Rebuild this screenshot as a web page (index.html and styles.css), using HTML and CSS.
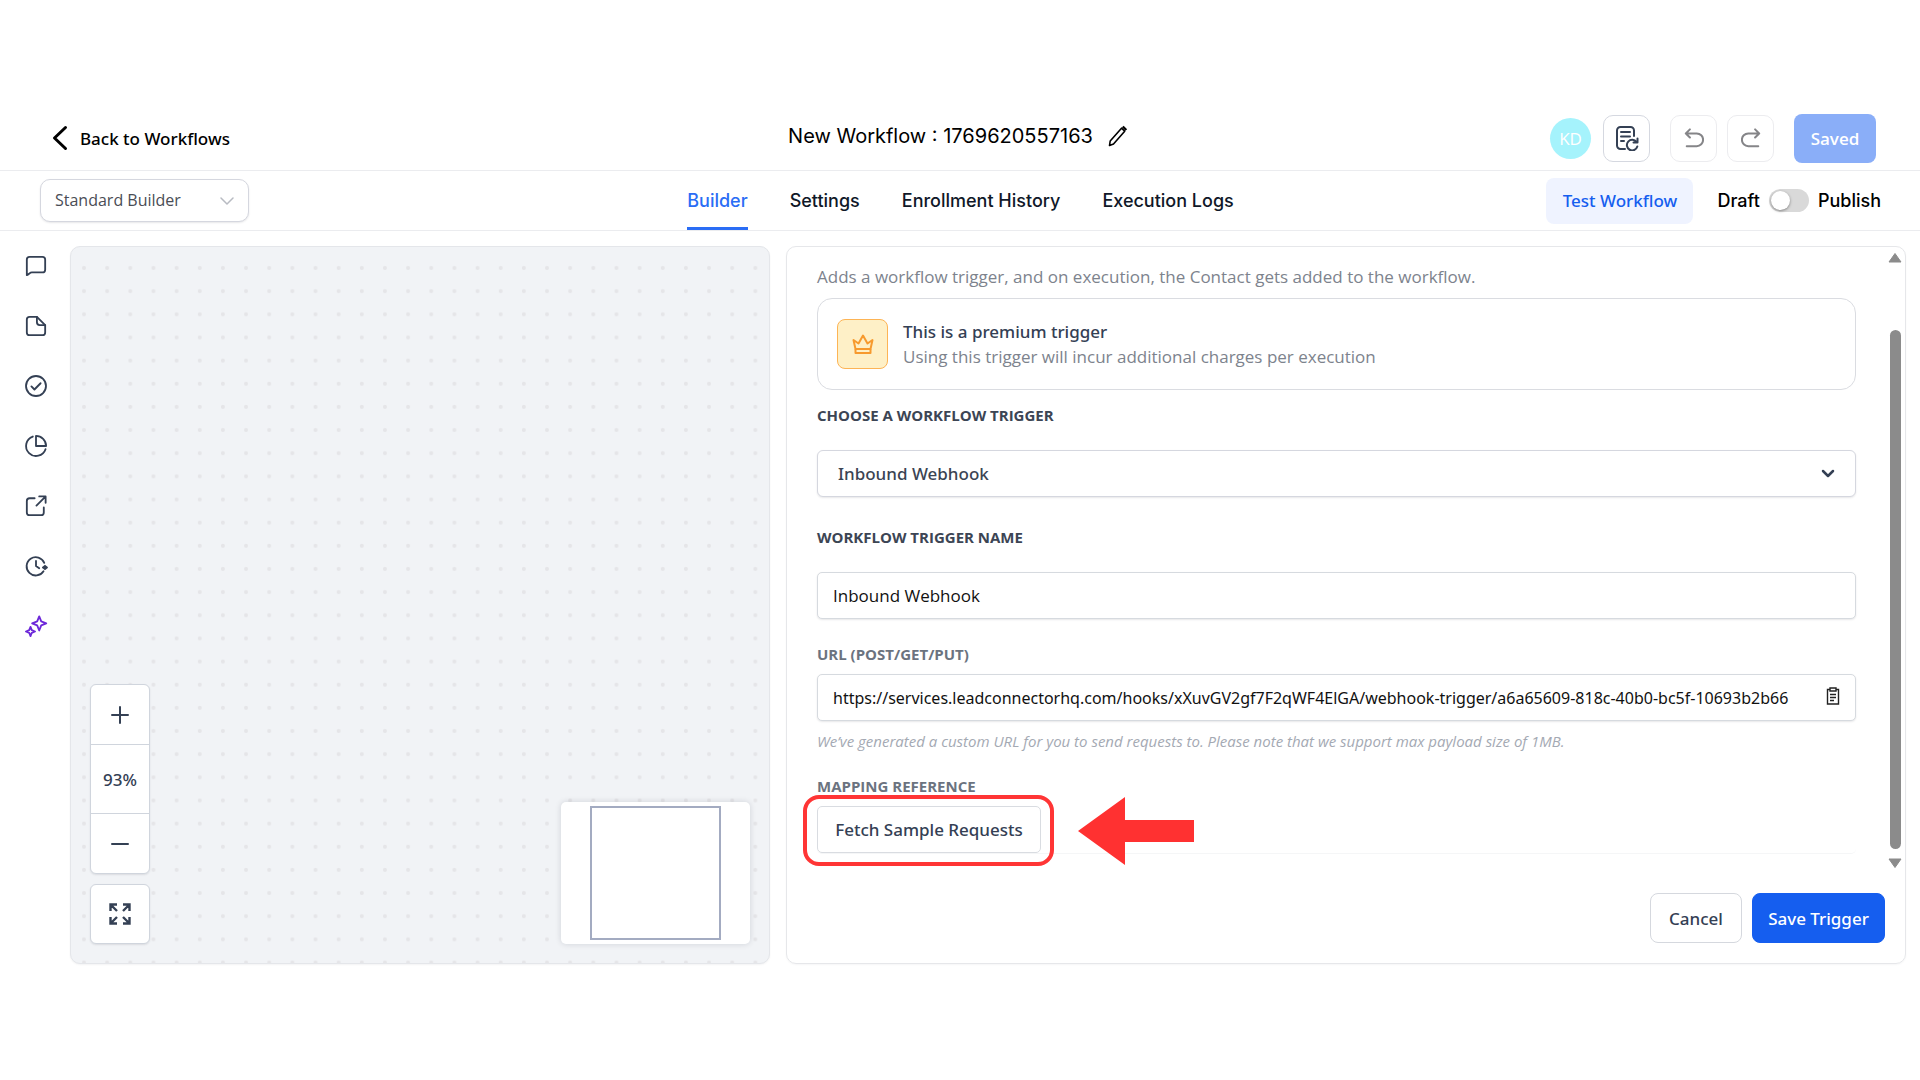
FILE: index.html
```html
<!DOCTYPE html>
<html lang="en">
<head>
<meta charset="utf-8">
<meta name="viewport" content="width=device-width, initial-scale=1">
<title>Workflow Builder</title>
<link rel="stylesheet" href="styles.css">
</head>
<body>
<header class="topbar">
  <a class="back" href="#">
    <svg width="16" height="26" viewBox="0 0 16 26" fill="none" stroke="currentColor" stroke-width="3" stroke-linecap="round" stroke-linejoin="round"><path d="M13.500 2.500 2.500 13l11 10.500"/></svg>
    <span>Back to Workflows</span>
  </a>
  <div class="title">
    <h1 class="title-text">New Workflow : 1769620557163</h1>
    <button class="plain" type="button" aria-label="Rename workflow">
      <svg width="20" height="22" viewBox="0 0 20 22" fill="none" stroke="currentColor" stroke-width="1.600" stroke-linejoin="round"><path d="M1.500 20.500 2.200 16 13.500 3.200l3.200 3L5.500 19Z"/><path d="M14.800 1.500l3.500 3.500" stroke-width="2.400"/></svg>
    </button>
  </div>
  <div class="actions">
    <span class="avatar">KD</span>
    <button class="square log" type="button" aria-label="Change log">
      <svg width="24" height="26" viewBox="0 0 24 26" fill="none" stroke="currentColor" stroke-width="2" stroke-linecap="round" stroke-linejoin="round"><path d="M10 24H5.500a3.500 3.500 0 0 1-3.500-3.500v-15A3.500 3.500 0 0 1 5.500 2h10A3.500 3.500 0 0 1 19 5.500V11"/><path d="M6 7h9M6 11.500h9M6 16h3"/><path d="M21.500 17a5.300 5.300 0 1 0 .8 4.500M22.500 13.500v4h-4"/></svg>
    </button>
    <button class="square undo" type="button" aria-label="Undo">
      <svg width="20" height="20" viewBox="0 0 22 22" fill="none" stroke="currentColor" stroke-width="2.200" stroke-linecap="round" stroke-linejoin="round"><path d="M2 6h12a7 7 0 0 1 0 14H3M6.500 1.500 2 6l4.500 4.500"/></svg>
    </button>
    <button class="square redo" type="button" aria-label="Redo">
      <svg width="20" height="20" viewBox="0 0 22 22" fill="none" stroke="currentColor" stroke-width="2.200" stroke-linecap="round" stroke-linejoin="round"><path d="M20 6H8a7 7 0 0 0 0 14h11M15.500 1.500 20 6l-4.500 4.500"/></svg>
    </button>
    <button class="saved" type="button">Saved</button>
  </div>
</header>

<div class="subbar">
  <div class="picker mode">
    <select class="picker-select" aria-label="Builder mode"><option>Standard Builder</option></select>
    <svg class="picker-icon" width="14" height="10" viewBox="0 0 14 10" fill="none" stroke="currentColor" stroke-width="1.500" stroke-linecap="round" stroke-linejoin="round"><path d="M1 2l6 6 6-6"/></svg>
  </div>
  <nav class="tabs">
    <a class="tab active" href="#">Builder</a>
    <a class="tab" href="#">Settings</a>
    <a class="tab" href="#">Enrollment History</a>
    <a class="tab" href="#">Execution Logs</a>
  </nav>
  <div class="publish">
    <button class="test" type="button">Test Workflow</button>
    <span>Draft</span>
    <input class="switch" type="checkbox" id="publish">
    <label for="publish">Publish</label>
  </div>
</div>

<main class="workspace">
  <nav class="rail">
    <button class="plain" type="button" aria-label="Comments"><svg class="rail-icon" viewBox="0 0 24 24"><path d="M2 22V5a3 3 0 0 1 3-3h14a3 3 0 0 1 3 3v11a3 3 0 0 1-3 3H7.500c-2 0-3 1.800-5.500 3Z"/></svg></button>
    <button class="plain" type="button" aria-label="Notes"><svg class="rail-icon" viewBox="0 0 24 24"><path d="M13 2H5a3 3 0 0 0-3 3v14a3 3 0 0 0 3 3h14a3 3 0 0 0 3-3v-8L13 2Z"/><path d="M13 2v6a3 3 0 0 0 3 3h6"/></svg></button>
    <button class="plain" type="button" aria-label="Checks"><svg class="rail-icon" viewBox="0 0 24 24"><circle cx="12" cy="12" r="10.900"/><path d="M7 12.500l3.300 3.300L17 9"/></svg></button>
    <button class="plain" type="button" aria-label="Statistics"><svg class="rail-icon" viewBox="0 0 24 24"><path d="M8.500 1.700A10.900 10.900 0 1 0 22.400 15.500"/><path d="M12 1v11h11A11 11 0 0 0 12 1Z"/></svg></button>
    <button class="plain" type="button" aria-label="Open in new tab"><svg class="rail-icon" viewBox="0 0 24 24"><path d="M10.500 3.500H5a3 3 0 0 0-3 3V19a3 3 0 0 0 3 3h12.500a3 3 0 0 0 3-3v-5.500M12.500 11.500 22 2M15.500 1.500h7v7"/></svg></button>
    <button class="plain" type="button" aria-label="History"><svg class="rail-icon" viewBox="0 0 24 24"><path d="M21 8.500a10 10 0 1 0-.8 9.200M12 6.500V12l3.500 2.500"/><path d="M19.500 13.500h4.500M21.800 11.800l2 1.800-2 1.800-2-1.800Z" fill="currentColor"/></svg></button>
    <button class="plain assistant" type="button" aria-label="AI assistant"><svg class="rail-icon" viewBox="0 0 24 24"><path d="M15.500 1.500 17.700 7l5.500 2.200-5.500 2.200-2.200 5.500-2.200-5.500-5.500-2.200L13.300 7ZM6 13l1.400 3.500L11 18l-3.600 1.400L6 23l-1.400-3.600L1 18l3.600-1.500Z"/></svg></button>
  </nav>

  <section class="canvas" aria-label="Workflow canvas">
    <svg class="dots" width="100%" height="100%" aria-hidden="true">
      <defs><pattern id="grid" x="1.500" y="9.500" width="23.150" height="23.150" patternUnits="userSpaceOnUse"><circle cx="11.500" cy="11.500" r="2" fill="#e5e5e8"/></pattern></defs>
      <rect width="100%" height="100%" fill="url(#grid)"/>
    </svg>
    <div class="zoom">
      <div class="zoom-group">
        <button class="zoom-cell" type="button" aria-label="Zoom in"><svg width="18" height="18" viewBox="0 0 18 18" fill="none" stroke="currentColor" stroke-width="2" stroke-linecap="round"><path d="M1 9h16M9 1v16"/></svg></button>
        <output class="zoom-cell zoom-value">93%</output>
        <button class="zoom-cell" type="button" aria-label="Zoom out"><svg width="18" height="18" viewBox="0 0 18 18" fill="none" stroke="currentColor" stroke-width="2" stroke-linecap="round"><path d="M1 9h16"/></svg></button>
      </div>
      <button class="zoom-group zoom-fit" type="button" aria-label="Fit to screen"><svg width="22" height="22" viewBox="0 0 22 22" fill="none" stroke="currentColor" stroke-width="2.400"><path d="M1.500 8V1.500H8M2 2l6 6M14 1.500h6.500V8M20 2l-6 6M1.500 14v6.500H8M2 20l6-6M20.500 14v6.500H14M20 20l-6-6"/></svg></button>
    </div>
    <div class="minimap"><div class="minimap-view"></div></div>
  </section>

  <form class="panel">
    <div class="panel-main">
      <div class="fields">
        <p class="intro">Adds a workflow trigger, and on execution, the Contact gets added to the workflow.</p>
        <div class="premium">
          <span class="crown"><svg width="24" height="24" viewBox="0 0 24 24" fill="none" stroke="currentColor" stroke-width="2" stroke-linejoin="round"><path d="M4.500 17 2.500 8l5 3.500L12 3.500l4.500 8 5-3.500-2 9Z"/><path d="M4.500 17v4h15v-4"/></svg></span>
          <div>
            <strong class="premium-title">This is a premium trigger</strong>
            <p class="premium-note">Using this trigger will incur additional charges per execution</p>
          </div>
        </div>
        <label class="label first" for="trigger">CHOOSE A WORKFLOW TRIGGER</label>
        <div class="picker">
          <select class="picker-select trigger" id="trigger"><option>Inbound Webhook</option></select>
          <svg class="picker-icon strong" width="14" height="10" viewBox="0 0 14 10" fill="none" stroke="currentColor" stroke-width="2.500" stroke-linecap="round" stroke-linejoin="round"><path d="M2 2l5 5 5-5"/></svg>
        </div>
        <label class="label second" for="name">WORKFLOW TRIGGER NAME</label>
        <input class="box" id="name" type="text" value="Inbound Webhook">
        <label class="label compact" for="url">URL (POST/GET/PUT)</label>
        <div class="picker">
          <input class="box url" id="url" type="text" value="https://services.leadconnectorhq.com/hooks/xXuvGV2gf7F2qWF4ElGA/webhook-trigger/a6a65609-818c-40b0-bc5f-10693b2b66" readonly>
          <button class="plain copy" type="button" aria-label="Copy URL"><svg width="14" height="18" viewBox="0 0 14 18" fill="none" stroke="currentColor" stroke-width="1.400"><path d="M4 2.500H1.500V17h11V2.500H10M4 1h6v3H4ZM4 7.500h6M4 10.500h6M4 13.500h4"/></svg></button>
        </div>
        <p class="help">We’ve generated a custom URL for you to send requests to. Please note that we support max payload size of 1MB.</p>
        <span class="label compact">MAPPING REFERENCE</span>
        <div class="fetch-row">
          <div class="fetch-wrap">
            <button class="fetch" type="button">Fetch Sample Requests</button>
            <div class="highlight"></div>
            <svg class="arrow" width="116" height="68" viewBox="0 0 116 68" fill="#ff3131"><path d="M0 34 47 0v23h69v22H47v23Z"/></svg>
          </div>
        </div>
      </div>
      <div class="scroll" aria-hidden="true">
        <svg width="16" height="12" viewBox="0 0 16 12" fill="currentColor"><path d="M8 1.500 14 10H2Z" stroke="currentColor" stroke-linejoin="round"/></svg>
        <div class="thumb"></div>
        <svg width="16" height="12" viewBox="0 0 16 12" fill="currentColor"><path d="M8 10.500 14 2H2Z" stroke="currentColor" stroke-linejoin="round"/></svg>
      </div>
    </div>
    <div class="footer">
      <button class="button" type="button">Cancel</button>
      <button class="button primary" type="button">Save Trigger</button>
    </div>
  </form>
</main>
</body>
</html>
```
FILE: styles.css
```css
* { box-sizing: border-box; }
body {
  margin: 0;
  padding-top: 106px;
  background: #fff;
  color: #000;
  font-family: "Open Sans", "Noto Sans", sans-serif;
  font-size: 17px;
  line-height: 25px;
}
button, input, select { font: inherit; color: inherit; margin: 0; }
a { color: inherit; text-decoration: none; }
p, h1 { margin: 0; }
svg { display: block; flex: none; }
.plain { border: 0; padding: 0; background: none; }
.back, .test, .premium-title, .picker-select.trigger, .fetch, .button, .zoom-value {
  font-family: "Noto Sans", "Open Sans", sans-serif;
  font-weight: 500;
}

.topbar, .subbar {
  display: grid;
  grid-template-columns: 1fr auto 1fr;
  align-items: center;
  border-bottom: 1px solid #ebecef;
}
.topbar { height: 65px; padding: 0 44px 0 40px; }
.back { display: flex; align-items: center; gap: 12px; padding-left: 12px; }
.title { display: flex; align-items: center; gap: 15px; padding-bottom: 4px; font-family: Inter, sans-serif; }
.title-text { font-size: 20px; font-weight: 400; }
.actions { display: flex; align-items: center; justify-content: flex-end; }
.avatar {
  width: 41px; height: 41px; margin-right: 12px;
  border-radius: 50%; background: #a5f3fc; color: #fff;
  text-align: center; line-height: 41px;
}
.square {
  display: grid; place-items: center;
  width: 47px; height: 47px; padding: 0;
  border: 1px solid #ececef; border-radius: 10px; background: #fff; color: #858588;
}
.log { border-color: #d5d8e0; color: #344054; margin-right: 20px; }
.undo { margin-right: 10px; }
.redo { margin-right: 20px; }
.saved {
  width: 82px; height: 49px; padding: 0;
  border: 0; border-radius: 8px; background: #8aaef8; color: #fff; font-weight: 600;
}

.subbar { height: 60px; padding: 0 39px 0 40px; }
.picker { display: grid; align-items: center; }
.picker > * { grid-area: 1 / 1; }
.picker-select {
  appearance: none;
  width: 100%; height: 43px; padding: 0 14px;
  border: 1px solid #d5d7df; border-radius: 10px; background: #fff; color: #4a4d55;
  box-shadow: 0 1px 2px #1018281a;
  font-size: 16px;
}
.picker-icon { justify-self: end; margin-right: 15px; color: #b8bbc2; pointer-events: none; }
.mode { width: 209px; }
.tabs { display: flex; align-self: stretch; gap: 42px; font: 500 18px/60px Inter, sans-serif; color: #101828; }
.tab { height: 59px; }
.tab.active { color: #2a6df5; border-bottom: 3px solid #2a6df5; }
.publish { display: flex; align-items: center; justify-content: flex-end; gap: 9px; font: 500 18px/24px Inter, sans-serif; }
.test {
  width: 147px; height: 46px; margin-right: 15px; padding: 0;
  border: 0; border-radius: 8px; background: #eff3ff; color: #155eef;
  font-size: 17px;
}
.switch {
  appearance: none;
  display: flex; align-items: center;
  width: 40px; height: 23px; padding: 2px;
  border-radius: 12px; background: #d9d9d9;
}
.switch::before { content: ""; width: 19px; height: 19px; border-radius: 50%; background: #fff; box-shadow: 0 1px 3px #0006; }

.workspace {
  display: grid;
  grid-template-columns: 54px 5fr 8fr;
  column-gap: 16px;
  padding: 15px 14px 40px 0;
}
.rail { display: flex; flex-direction: column; align-items: center; gap: 36px; padding: 8px 0 0 17px; color: #344054; }
.rail-icon { width: 24px; height: 24px; padding: 1px; overflow: visible; fill: none; stroke: currentColor; stroke-width: 2; stroke-linecap: round; stroke-linejoin: round; }
.assistant { color: #6d28d9; }

.canvas {
  position: relative;
  display: flex; align-items: flex-end; justify-content: space-between;
  padding: 19px;
  border: 1px solid #e4e6ea; border-radius: 10px; background: #f1f3f6;
  box-shadow: 0 1px 2px #1018280d;
  overflow: hidden;
}
.dots { position: absolute; inset: 0; }
.zoom { position: relative; display: flex; flex-direction: column; gap: 10px; width: 60px; color: #344054; }
.zoom-group { border: 1px solid #d0d5dd; border-radius: 6px; background: #fff; box-shadow: 0 1px 2px #1018281a; overflow: hidden; }
.zoom-cell { display: grid; place-items: center; width: 100%; height: 59px; padding: 0; border: 0; background: none; }
.zoom-value { height: 70px; border-top: 1px solid #d0d5dd; border-bottom: 1px solid #d0d5dd; }
.zoom-fit { display: grid; place-items: center; height: 60px; padding: 0; }
.minimap { position: relative; width: 189px; height: 142px; padding: 4px 29px; border-radius: 5px; background: #fff; box-shadow: 0 0 6px #10182824; }
.minimap-view { height: 134px; border: 2px solid #a3abc1; }

.panel { display: flex; flex-direction: column; border: 1px solid #e6e7ea; border-radius: 10px; box-shadow: 0 1px 2px #1018280a; min-width: 0; }
.panel-main { display: flex; gap: 25px; }
.fields { flex: 1; min-width: 0; display: flex; flex-direction: column; padding: 17px 0 15px 30px; }
.intro, .premium-note { color: #7d838d; }
.premium {
  display: flex; align-items: center; gap: 15px;
  height: 92px; margin-top: 9px; padding: 0 19px;
  border: 1px solid #dadce1; border-radius: 15px;
}
.crown { display: grid; place-items: center; width: 51px; height: 50px; border: 1px solid #fdb455; border-radius: 8px; background: #fef0c7; color: #f79a2e; }
.premium-title { display: block; color: #344054; }
.label { font-size: 15px; line-height: 20px; font-weight: 700; color: #3c4554; }
.label.first { margin: 15px 0 25px; }
.label.second { margin: 30px 0 25px; }
.label.compact { margin: 25px 0 10px; color: #6b737f; }
.picker-select.trigger { height: 47px; padding: 0 20px; border-radius: 6px; color: #3b4453; font-size: 17px; }
.picker-icon.strong { margin-right: 21px; color: #344054; }
.box {
  width: 100%; height: 47px; padding: 0 15px;
  border: 1px solid #d6dadf; border-radius: 5px; background: #fff; color: #111;
  box-shadow: 0 1px 2px #1018281a;
}
.url { font-family: "Noto Sans", "Open Sans", sans-serif; font-size: 16px; }
.copy { justify-self: end; margin: 0 16px 4px 0; background: #fff; color: #222; }
.help { margin-top: 10px; font-size: 15px; line-height: 20px; font-style: italic; color: #a4a9b3; }
.fetch-row { display: flex; border-bottom: 1px solid #f5f6f7; border-radius: 5px; }
.fetch-wrap { position: relative; }
.fetch { width: 224px; height: 47px; padding: 0; border: 1px solid #d9dce1; border-radius: 5px; background: #fff; color: #344054; }
.highlight { position: absolute; inset: -11px -13px -13px -14px; border: 4px solid #ff3535; border-radius: 16px; pointer-events: none; }
.arrow { position: absolute; left: 261px; top: -9px; }
.scroll { display: flex; flex-direction: column; align-items: center; width: 24px; padding: 5px 0 0 4px; color: #8b8b8b; }
.thumb { width: 11px; flex: 1; margin: 66px 0 8px; border-radius: 6px; background: #8b8b8b; }
.footer { display: flex; justify-content: flex-end; gap: 10px; padding: 24px 20px 20px; }
.button { width: 92px; height: 50px; padding: 0; border: 1px solid #d5d8de; border-radius: 8px; background: #fff; color: #344054; }
.primary { width: 133px; border-color: #155eef; background: #155eef; color: #fff; }
```
